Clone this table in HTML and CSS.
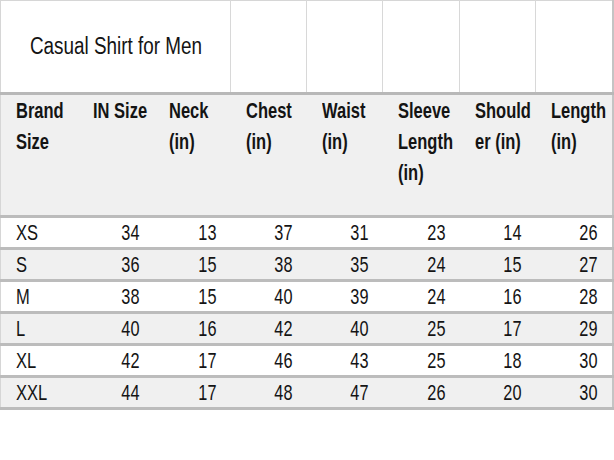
FILE: index.html
```html
<!DOCTYPE html>
<html>
<head>
<meta charset="utf-8">
<link rel="stylesheet" href="styles.css">
</head>
<body>
<table class="chart">
  <colgroup>
    <col class="c77"><col class="c76"><col class="c77"><col class="c76"><col class="c76"><col class="c77"><col class="c76"><col class="c77">
  </colgroup>
  <tr class="title-row">
    <td class="title" colspan="3"><span class="tt">Casual Shirt for Men</span></td>
    <td></td><td></td><td></td><td></td><td></td>
  </tr>
  <tr class="head">
    <th><span class="n">Brand<br>Size</span></th>
    <th><span class="n">IN Size</span></th>
    <th><span class="n">Neck<br>(in)</span></th>
    <th><span class="n">Chest<br>(in)</span></th>
    <th><span class="n">Waist<br>(in)</span></th>
    <th><span class="n">Sleeve<br>Length<br>(in)</span></th>
    <th><span class="n">Should<br>er (in)</span></th>
    <th><span class="n">Length<br>(in)</span></th>
  </tr>
  <tr class="row"><td class="size"><span class="n">XS</span></td><td><span class="v">34</span></td><td><span class="v">13</span></td><td><span class="v">37</span></td><td><span class="v">31</span></td><td><span class="v">23</span></td><td><span class="v">14</span></td><td><span class="v">26</span></td></tr>
  <tr class="row alt"><td class="size"><span class="n">S</span></td><td><span class="v">36</span></td><td><span class="v">15</span></td><td><span class="v">38</span></td><td><span class="v">35</span></td><td><span class="v">24</span></td><td><span class="v">15</span></td><td><span class="v">27</span></td></tr>
  <tr class="row"><td class="size"><span class="n">M</span></td><td><span class="v">38</span></td><td><span class="v">15</span></td><td><span class="v">40</span></td><td><span class="v">39</span></td><td><span class="v">24</span></td><td><span class="v">16</span></td><td><span class="v">28</span></td></tr>
  <tr class="row alt"><td class="size"><span class="n">L</span></td><td><span class="v">40</span></td><td><span class="v">16</span></td><td><span class="v">42</span></td><td><span class="v">40</span></td><td><span class="v">25</span></td><td><span class="v">17</span></td><td><span class="v">29</span></td></tr>
  <tr class="row"><td class="size"><span class="n">XL</span></td><td><span class="v">42</span></td><td><span class="v">17</span></td><td><span class="v">46</span></td><td><span class="v">43</span></td><td><span class="v">25</span></td><td><span class="v">18</span></td><td><span class="v">30</span></td></tr>
  <tr class="row alt"><td class="size"><span class="n">XXL</span></td><td><span class="v">44</span></td><td><span class="v">17</span></td><td><span class="v">48</span></td><td><span class="v">47</span></td><td><span class="v">26</span></td><td><span class="v">20</span></td><td><span class="v">30</span></td></tr>
</table>
</body>
</html>
```
FILE: styles.css
```css
html, body {
  margin: 0;
  padding: 0;
  background: #ffffff;
}
body {
  font-family: "Liberation Sans", Arial, sans-serif;
  color: #141414;
}
.chart {
  width: 612px;
  border-collapse: collapse;
  table-layout: fixed;
  border-left: 1px solid #d6d6d6;
  border-right: 2px solid #c4c4c4;
  border-top: 1px solid #d6d6d6;
}
.c77 { width: 77px; }
.c76 { width: 76px; }
.chart td, .chart th {
  padding: 0;
}
/* condensed lettering, as in the source image */
.tt, .n, .v {
  display: inline-block;
  white-space: nowrap;
}
.tt {
  transform: scaleX(0.82);
  transform-origin: left center;
}
.n {
  transform: scaleX(0.75);
  transform-origin: left top;
}
.v {
  transform: scaleX(0.74);
  transform-origin: right center;
}
.title-row td {
  height: 91px;
  border-left: 1px solid #d8d8d8;
  background: #ffffff;
}
.title-row td.title {
  border-left: none;
  padding-left: 29px;
  font-size: 23px;
  white-space: nowrap;
  vertical-align: middle;
}
.head th {
  background: #f0f0f0;
  border-top: 3px solid #b8b8b8;
  border-bottom: 3px solid #bcbcbc;
  height: 120px;
  vertical-align: top;
  text-align: left;
  padding: 0 0 0 15px;
  font-size: 22px;
  font-weight: bold;
  line-height: 31px;
  white-space: nowrap;
  overflow: hidden;
}
.row td {
  height: 28px;
  border-bottom: 3px solid #bcbcbc;
  background: #ffffff;
  font-size: 22px;
  text-align: right;
  padding: 1px 14px 0 0;
  vertical-align: middle;
  line-height: 28px;
}
.row.alt td {
  background: #f0f0f0;
}
.row td.size {
  text-align: left;
  padding-left: 15px;
  padding-right: 0;
}
.row td.size .n {
  transform-origin: left center;
}
```
